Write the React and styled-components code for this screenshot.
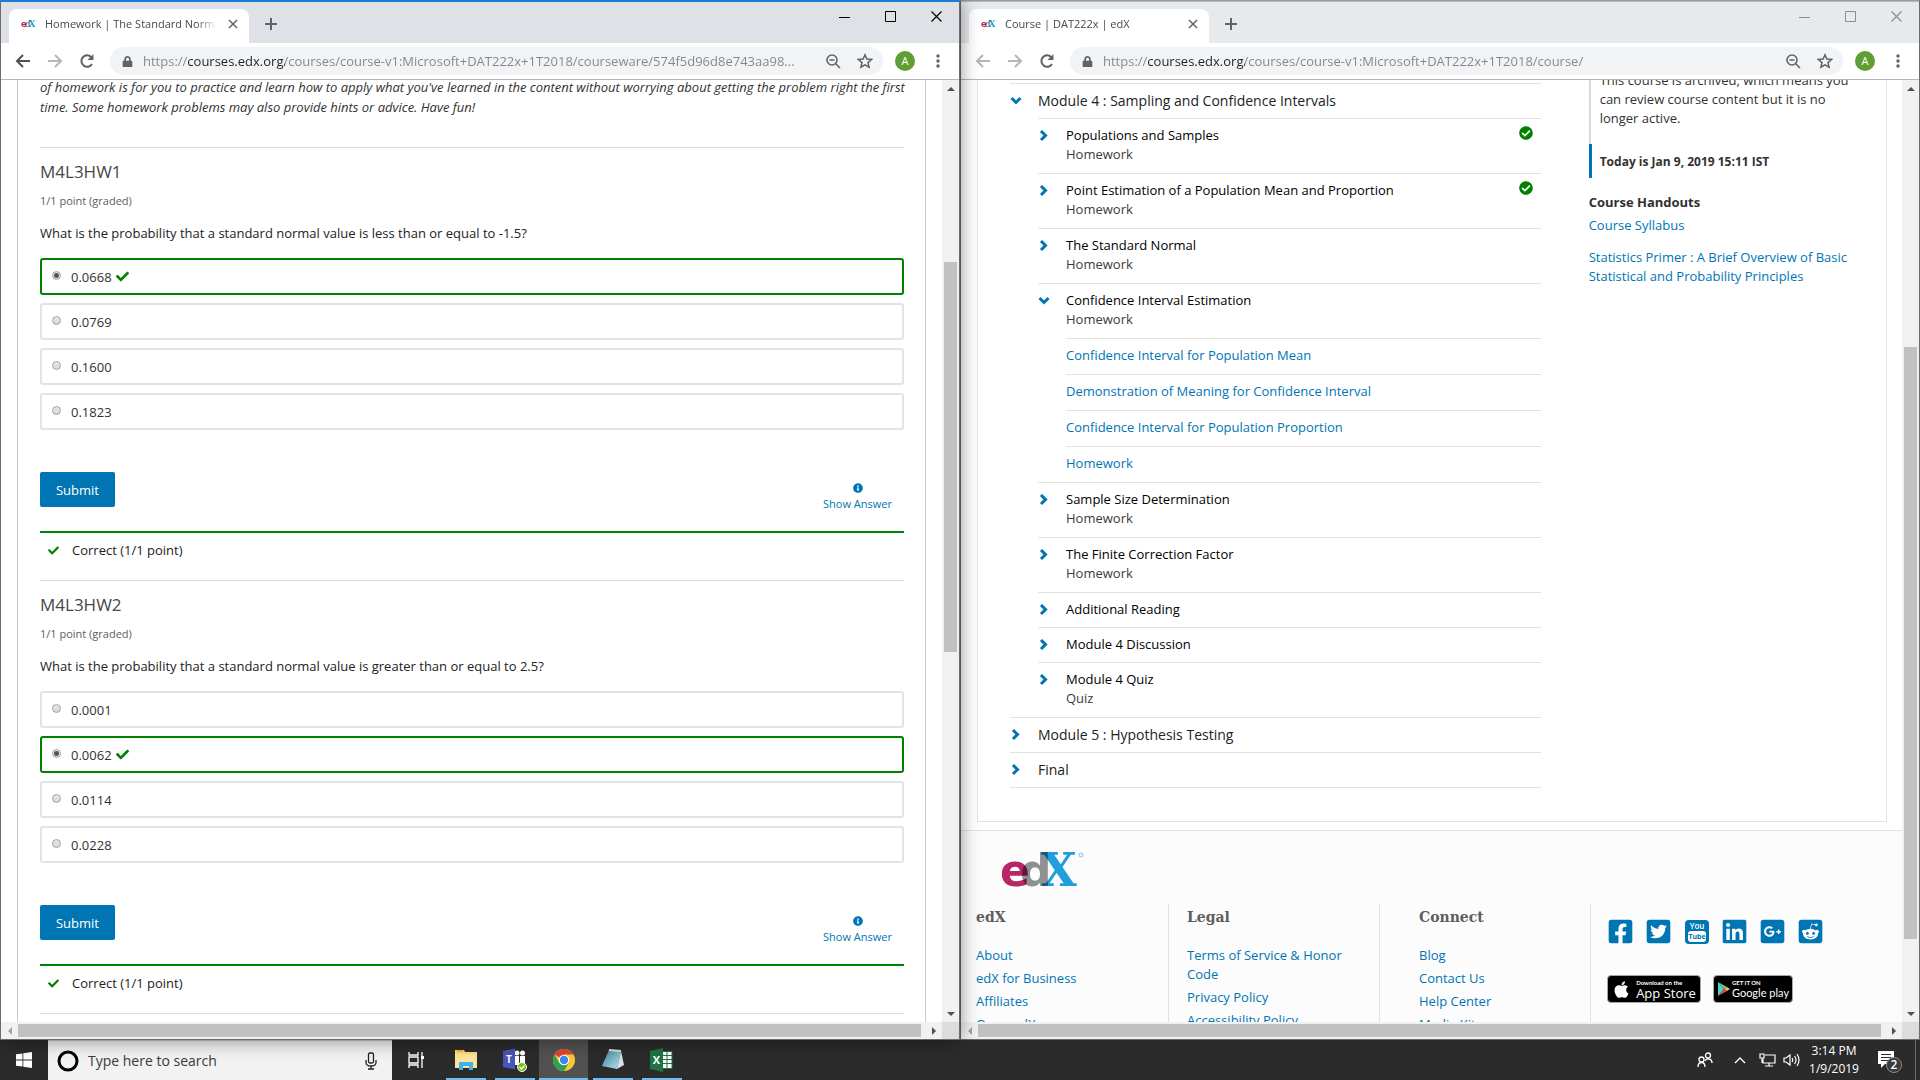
import React from 'react';
import styled, { createGlobalStyle, css } from 'styled-components';
import { FaCheck, FaCheckCircle, FaInfoCircle, FaApple, FaFacebookSquare, FaTwitterSquare, FaLinkedin, FaGooglePlusSquare, FaRedditSquare, FaLock } from 'react-icons/fa';

const blue = '#0075b4';
const green = '#008100';
const line = '#e2e2e2';

const GlobalStyle = createGlobalStyle`
  * { box-sizing: border-box; }
  body { margin: 0; background: #2b2b2b; font-family: "Open Sans", "Noto Sans", sans-serif; font-size: 13px; color: #313131; }
  button, input { font: inherit; }
  h2, h3, p, ul { margin: 0; padding: 0; font-weight: 400; }
  ul { list-style: none; }
  a { color: ${blue}; text-decoration: none; }
  svg { display: block; flex: none; }
`;

const Desktop = styled.div`
  display: grid;
  grid-template-rows: minmax(0, 1fr) 40px;
  height: 100vh;
  overflow: hidden;
`;
const Windows = styled.main`
  display: grid;
  grid-template-columns: 1fr 1fr;
  min-height: 0;
`;
const Frame = styled.section`
  display: grid;
  grid-template-rows: 42px 37px minmax(0, 1fr);
  min-width: 0;
  min-height: 0;
  background: #fff;
  border: 1px solid #6b6b6b;
  border-top-color: ${p => (p.$active ? '#1a7fd4' : '#9b9b9b')};
  z-index: ${p => (p.$active ? 1 : 0)};
  box-shadow: ${p => (p.$active ? '0 0 18px rgba(0,0,0,.45)' : 'none')};
`;

/* ---- browser chrome ---- */
const TabStrip = styled.header`
  display: flex;
  align-items: flex-end;
  padding-left: 8px;
  border-top: 1px solid ${p => (p.$active ? '#1a7fd4' : '#b5b7b9')};
  background: ${p => (p.$active ? '#dee1e6' : '#e7eaed')};
`;
const Tab = styled.div`
  display: flex;
  align-items: center;
  gap: 8px;
  width: 240px;
  height: 34px;
  padding: 0 8px 4px 12px;
  border-radius: 8px 8px 0 0;
  background: #fff;
`;
const TabTitle = styled.span`
  flex: 1;
  min-width: 0;
  overflow: hidden;
  white-space: nowrap;
  font-size: 11px;
  line-height: 18px;
  color: #45494d;
  mask-image: linear-gradient(to right, #000 88%, transparent);
`;
const IconButton = styled.button`
  display: flex;
  align-items: center;
  justify-content: center;
  flex: none;
  width: ${p => p.$w || 32}px;
  height: ${p => p.$h || 28}px;
  padding: 0;
  border: 0;
  background: none;
  color: ${p => p.$color || '#5f6368'};
`;
const Controls = styled.div`
  display: flex;
  align-self: flex-start;
  margin-left: auto;
`;
const Toolbar = styled.div`
  display: flex;
  align-items: center;
  padding: 0 5px 0 6px;
  border-bottom: 1px solid #b6b6b8;
`;
const AddressBar = styled.label`
  display: flex;
  align-items: center;
  flex: 1;
  min-width: 0;
  height: 28px;
  margin: 0 12px 0 7px;
  padding: 0 2px 0 12px;
  border-radius: 14px;
  background: #f1f3f4;
  color: #5f6368;
`;
const Address = styled.input`
  flex: 1;
  min-width: 0;
  margin-left: 10px;
  padding: 0;
  border: 0;
  outline: 0;
  font-size: 13px;
  line-height: 20px;
  color: #80868b;
  background: linear-gradient(to right, #80868b 45px, #202124 45px, #202124 142px, #80868b 142px);
  background-clip: text;
  -webkit-text-fill-color: transparent;
`;
const Avatar = styled.button`
  width: 20px;
  height: 20px;
  margin-right: 7px;
  padding: 0;
  border: 0;
  border-radius: 50%;
  background: #5f9e34;
  color: #fff;
  font-size: 11px;
  line-height: 20px;
`;

/* ---- page viewport and scrollbars ---- */
const Viewport = styled.div`
  display: grid;
  grid-template: minmax(0, 1fr) 17px / minmax(0, 1fr) 17px;
  min-height: 0;
`;
const Page = styled.div`
  overflow: hidden;
  min-height: 0;
  display: flex;
  flex-direction: column;
`;
const Track = styled.div`
  display: grid;
  grid-template: ${p => (p.$vertical ? '17px minmax(0, 1fr) 17px / 1fr' : '1fr / 17px minmax(0, 1fr) 17px')};
  background: #f1f1f1;
  svg { place-self: center; fill: #505050; }
  svg:first-child { fill: ${p => (p.$atStart ? '#a3a3a3' : '#505050')}; }
`;
const Groove = styled.div`
  display: flex;
  flex-direction: ${p => (p.$vertical ? 'column' : 'row')};
  padding: ${p => (p.$vertical ? '0 2px' : '2px 0')};
`;
const Thumb = styled.div`
  background: #c1c1c1;
`;
const Corner = styled.div`
  background: #dcdcdc;
`;

/* ---- homework page ---- */
const HomeworkCard = styled.div`
  flex: 1;
  margin: 0 16px;
  padding: 0 21px 0 22px;
  border: 1px solid #c8c8c8;
  border-width: 0 1px;
`;
const Intro = styled.p`
  height: 70px;
  margin-top: -3px;
  font-style: italic;
  line-height: 20px;
  white-space: pre;
`;
const Problem = styled.section`
  height: 433px;
  padding-top: 12px;
  border-top: 1px solid #dcdcdc;
`;
const ProblemTitle = styled.h3`
  font-size: 17px;
  line-height: 24px;
  color: #474747;
`;
const Points = styled.p`
  margin-top: 9px;
  font-size: 11px;
  line-height: 16px;
  color: #5e5e5e;
`;
const Question = styled.p`
  margin: 14px 0 15px;
  line-height: 20px;
  color: #222;
`;
const Choices = styled.div`
  display: grid;
  gap: 8px;
`;
const Choice = styled.label`
  display: flex;
  align-items: center;
  height: 37px;
  padding-left: 10px;
  border: 2px solid ${p => (p.$correct ? green : '#e3e3e3')};
  border-radius: 3px;
  svg { margin-left: 4px; color: ${green}; }
`;
const Radio = styled.input`
  appearance: none;
  width: 9px;
  height: 9px;
  margin: 0 10px 2px 0;
  border: 1px solid #a2a2a2;
  border-radius: 50%;
  background: ${p => (p.defaultChecked ? 'radial-gradient(circle, #555 2px, #e4e4e4 3px)' : 'linear-gradient(#e8e8e8, #d8d8d8)')};
`;
const Actions = styled.div`
  display: flex;
  align-items: flex-start;
  justify-content: space-between;
  height: 101px;
  padding: 42px 12px 0 0;
`;
const Submit = styled.button`
  width: 75px;
  height: 35px;
  border: 0;
  border-radius: 2px;
  background: ${blue};
  color: #fff;
`;
const ShowAnswer = styled.button`
  display: flex;
  flex-direction: column;
  align-items: center;
  margin-top: 11px;
  padding: 0;
  border: 0;
  background: none;
  color: ${blue};
  font-size: 11px;
  line-height: 16px;
  gap: 3px;
`;
const Status = styled.p`
  display: flex;
  align-items: center;
  gap: 13px;
  padding: 6px 8px 0;
  border-top: 2px solid ${green};
  color: #222;
  line-height: 22px;
  svg { color: ${green}; }
`;

/* ---- course page ---- */
const CourseCard = styled.div`
  display: grid;
  grid-template-columns: 2fr 1fr;
  gap: 48px;
  height: 742px;
  margin: 0 15px 8px 16px;
  padding: 3px 32px 0;
  border: 1px solid ${line};
  border-top: 0;
`;
const Outline = styled.ul`
  > li { border-top: 1px solid ${line}; }
  > li:last-child { border-bottom: 1px solid ${line}; }
`;
const Lessons = styled.ul`
  padding-left: 28px;
`;
const Row = styled.div`
  display: flex;
  align-items: flex-start;
  min-height: ${p => (p.$double ? 54 : 34)}px;
  padding: ${p => (p.$module ? '7px 0 0' : '7px 8px 0 0')};
  color: ${p => (p.$module ? '#222' : '#000')};
  line-height: 19px;
  font-size: ${p => (p.$module ? 14 : 13)}px;
  > svg:first-child { margin: 4px 16px 0 0; }
`;
const RowText = styled.div`
  flex: 1;
`;
const Kind = styled.div`
  color: #3b3b3b;
`;
const Lesson = styled.li`
  border-top: 1px solid ${line};
`;
const Units = styled.ul`
  padding-left: 28px;
`;
const Unit = styled.li`
  height: 36px;
  padding-top: 7px;
  border-top: 1px solid ${line};
  line-height: 19px;
`;
const Sidebar = styled.aside`
  line-height: 19px;
`;
const NoticeWrap = styled.div`
  height: 61px;
  display: flex;
  align-items: flex-end;
`;
const Notice = styled.p`
  height: 73px;
  padding: 0 0 0 9px;
  border-left: 2px solid #d9d9d9;
`;
const Today = styled.p`
  height: 34px;
  padding: 8px 0 0 8px;
  border-left: 3px solid ${blue};
  font-size: 12px;
  font-weight: 700;
`;
const Handouts = styled.h3`
  margin: 15px 0 4px;
  font-size: 13px;
  font-weight: 700;
`;
const Handout = styled.p`
  margin-bottom: 13px;
  white-space: pre-line;
`;

const Footer = styled.footer`
  flex: 1;
  min-height: 0;
  padding: 20px 15px 0;
  border-top: 1px solid ${line};
  background: #fcfcfc;
`;
const LogoLink = styled.a`
  display: block;
  height: 53px;
  padding-left: 24px;
`;
const FooterGrid = styled.div`
  display: grid;
  grid-template-columns: 192fr 211fr 211fr 297fr;
  height: 300px;
`;
const FooterColumn = styled.div`
  padding: 0 16px 0 ${p => p.$indent || 0}px;
  border-left: ${p => (p.$indent ? `1px solid ${line}` : '0')};
  line-height: 19px;
  li { margin-bottom: 4px; }
`;
const FooterTitle = styled.h2`
  margin-bottom: 19px;
  padding-top: 3px;
  font: 700 14px/20px "DejaVu Serif", "Liberation Serif", serif;
  color: #5e5e5e;
`;
const Socials = styled.div`
  display: flex;
  gap: 11px;
  padding: 14px 0 30px;
  a {
    display: flex;
    align-items: center;
    justify-content: center;
    width: 27px;
    height: 27px;
  }
`;
const Badges = styled.div`
  display: flex;
  gap: 12px;
`;
const Badge = styled.a`
  display: flex;
  align-items: center;
  justify-content: center;
  gap: ${p => p.$gap}px;
  width: ${p => p.$w}px;
  height: 28px;
  border: 1px solid #a6a6a6;
  border-radius: 4px;
  background: #000;
  color: #fff;
`;
const BadgeText = styled.span`
  display: grid;
  font: ${p => (p.$light ? '400 11px/12px Lato' : '500 13px/13px "Open Sans"')}, sans-serif;
  white-space: nowrap;
  small { font: 700 6px/8px Lato, sans-serif; }
`;

/* ---- taskbar ---- */
const Taskbar = styled.nav`
  display: flex;
  background: #2b2b2b;
  color: #fff;
`;
const TaskButton = styled.button`
  display: flex;
  align-items: center;
  justify-content: center;
  width: ${p => p.$w || 49}px;
  height: 40px;
  padding: 0;
  border: 0;
  background: ${p => (p.$active ? '#515151' : 'none')};
  ${p => p.$open && css`
    background-image: linear-gradient(#76b9ed, #76b9ed);
    background-size: ${p.$active ? '100%' : '40px'} 2px;
    background-position: center bottom;
    background-repeat: no-repeat;
  `}
`;
const Search = styled.label`
  display: flex;
  align-items: center;
  width: 344px;
  padding: 0 15px 0 9px;
  background: #f2f2f2;
  border-top: 1px solid #c9c9c9;
`;
const SearchInput = styled.input`
  flex: 1;
  min-width: 0;
  padding: 0 0 0 9px;
  border: 0;
  outline: 0;
  background: none;
  font-size: 14px;
  &::placeholder { color: #3a3a3a; opacity: 1; }
`;
const Tray = styled.div`
  display: flex;
  align-items: center;
  margin-left: auto;
`;
const Clock = styled.time`
  width: 62px;
  text-align: center;
  font-size: 12px;
  line-height: 18px;
`;
const DesktopEdge = styled.button`
  width: 5px;
  height: 40px;
  padding: 0;
  border: 0;
  border-left: 1px solid #6a6a6a;
  background: none;
`;

const Chevron = ({ down }) => down ? (
  <svg width="12" height="12" viewBox="0 0 12 12"><path d="M1.500 3l4.500 4.500L10.500 3" fill="none" stroke={blue} strokeWidth="3" /></svg>
) : (
  <svg width="12" height="12" viewBox="0 0 12 12"><path d="M3 1l4.500 4.500L3 10" fill="none" stroke={blue} strokeWidth="3" /></svg>
);

const Logo = ({ width, height }) => (
  <svg width={width} height={height} viewBox="0 0 84 37" overflow="visible" role="img" aria-label="edX">
    <g style={{ isolation: 'isolate' }} fontWeight="700">
      <text x="0" y="35" fontFamily="DejaVu Sans" fontSize="44" fill="#b72667">e</text>
      <text x="20" y="35" fontFamily="DejaVu Sans" fontSize="44" fill="#8e9092" style={{ mixBlendMode: 'multiply' }}>d</text>
      <text x="41" y="35" fontFamily="DejaVu Serif" fontSize="46" fill="#1f9fdc" style={{ mixBlendMode: 'multiply' }}>X</text>
    </g>
    <circle cx="81" cy="4" r="2" fill="none" stroke="#7cc6ea" />
  </svg>
);

const Stroke = ({ d, size = 16, w = 2, vb = 16 }) => (
  <svg width={size} height={size} viewBox={`0 0 ${vb} ${vb}`} fill="none" stroke="currentColor" strokeWidth={w}><path d={d} /></svg>
);

function Scrollbar({ vertical, before, size, after }) {
  const arrows = vertical ? ['M0 5L4 1L8 5Z', 'M0 1L4 5L8 1Z'] : ['M5 0L1 4L5 8Z', 'M1 0L5 4L1 8Z'];
  const box = vertical ? [8, 6] : [6, 8];
  const Arrow = ({ d }) => <svg width={box[0]} height={box[1]}><path d={d} /></svg>;
  return (
    <Track $vertical={vertical} $atStart={before === 0}>
      <Arrow d={arrows[0]} />
      <Groove $vertical={vertical}>
        <div style={{ flex: before }} />
        <Thumb style={{ flex: size }} />
        <div style={{ flex: after }} />
      </Groove>
      <Arrow d={arrows[1]} />
    </Track>
  );
}

function BrowserWindow({ active, title, url, scroll, children }) {
  const ink = active ? '#000' : '#8b8d8f';
  return (
    <Frame $active={active}>
      <TabStrip $active={active}>
        <Tab>
          <Logo width={16} height={8} />
          <TabTitle>{title}</TabTitle>
          <IconButton $w={16} $h={16} aria-label="Close tab"><Stroke size={10} vb={10} w={1.500} d="M1 1l8 8M9 1l-8 8" /></IconButton>
        </Tab>
        <IconButton $w={44} $h={38} aria-label="New tab"><Stroke size={12} vb={12} d="M6 0v12M0 6h12" /></IconButton>
        <Controls>
          <IconButton $w={46} $color={ink} aria-label="Minimize"><Stroke size={11} vb={11} w={1} d="M0 6.500h11" /></IconButton>
          <IconButton $w={46} $color={ink} aria-label="Maximize"><Stroke size={11} vb={11} w={1} d="M.5.5h10v10H.5z" /></IconButton>
          <IconButton $w={46} $color={ink} aria-label="Close window"><Stroke size={11} vb={11} w={1.200} d="M.5.5l10 10M10.500.5l-10 10" /></IconButton>
        </Controls>
      </TabStrip>
      <Toolbar>
        <IconButton $color={active ? '#4f5357' : '#b4b6b8'} aria-label="Back"><Stroke d="M15 8H2M8 2L2 8l6 6" /></IconButton>
        <IconButton $color="#b4b6b8" aria-label="Forward"><Stroke d="M1 8h13M8 2l6 6-6 6" /></IconButton>
        <IconButton aria-label="Reload">
          <svg width="16" height="16" viewBox="0 0 16 16"><path d="M13 11A5.700 5.700 0 1 1 12.300 4.200" fill="none" stroke="currentColor" strokeWidth="2" /><path d="M14.500 1v6h-6z" fill="currentColor" /></svg>
        </IconButton>
        <AddressBar>
          <FaLock size={11} />
          <Address aria-label="Address" defaultValue={url} spellCheck={false} />
          <IconButton aria-label="Zoom"><Stroke size={15} vb={15} w={1.600} d="M9.500 9.500l4.500 4.500M3.500 6h5M6 1a5 5 0 1 0 0 10A5 5 0 1 0 6 1z" /></IconButton>
          <IconButton aria-label="Bookmark"><Stroke size={16} w={1.500} d="M8 1.800l1.900 4.300 4.700.4-3.600 3.100 1.100 4.600L8 11.800l-4.100 2.400L5 9.600 1.400 6.500l4.700-.4z" /></IconButton>
        </AddressBar>
        <Avatar aria-label="Profile">A</Avatar>
        <IconButton aria-label="Menu"><svg width="4" height="16" fill="currentColor"><circle cx="2" cy="3" r="1.700" /><circle cx="2" cy="8" r="1.700" /><circle cx="2" cy="13" r="1.700" /></svg></IconButton>
      </Toolbar>
      <Viewport>
        <Page>{children}</Page>
        <Scrollbar vertical {...scroll} />
        <Scrollbar before={0} size={904} after={4} />
        <Corner />
      </Viewport>
    </Frame>
  );
}

const problems = [
  { id: 'M4L3HW1', text: 'What is the probability that a standard normal value is less than or equal to -1.5?', options: ['0.0668', '0.0769', '0.1600', '0.1823'], answer: 0 },
  { id: 'M4L3HW2', text: 'What is the probability that a standard normal value is greater than or equal to 2.5?', options: ['0.0001', '0.0062', '0.0114', '0.0228'], answer: 1 },
];

function HomeworkPage() {
  return (
    <HomeworkCard>
      <Intro>{"of homework is for you to practice and learn how to apply what you've learned in the content without worrying about getting the problem right the first\ntime. Some homework problems may also provide hints or advice. Have fun!"}</Intro>
      {problems.map(p => (
        <Problem key={p.id}>
          <ProblemTitle>{p.id}</ProblemTitle>
          <Points>1/1 point (graded)</Points>
          <Question>{p.text}</Question>
          <Choices>
            {p.options.map((o, i) => (
              <Choice key={o} $correct={i === p.answer}>
                <Radio type="radio" name={p.id} defaultChecked={i === p.answer} />
                {o}
                {i === p.answer && <FaCheck size={13} />}
              </Choice>
            ))}
          </Choices>
          <Actions>
            <Submit>Submit</Submit>
            <ShowAnswer><FaInfoCircle size={10} />Show Answer</ShowAnswer>
          </Actions>
          <Status><FaCheck size={11} />Correct (1/1 point)</Status>
        </Problem>
      ))}
      <Problem />
    </HomeworkCard>
  );
}

const lessons = [
  { name: 'Populations and Samples', kind: 'Homework', done: true },
  { name: 'Point Estimation of a Population Mean and Proportion', kind: 'Homework', done: true },
  { name: 'The Standard Normal', kind: 'Homework' },
  { name: 'Confidence Interval Estimation', kind: 'Homework', units: ['Confidence Interval for Population Mean', 'Demonstration of Meaning for Confidence Interval', 'Confidence Interval for Population Proportion', 'Homework'] },
  { name: 'Sample Size Determination', kind: 'Homework' },
  { name: 'The Finite Correction Factor', kind: 'Homework' },
  { name: 'Additional Reading' },
  { name: 'Module 4 Discussion' },
  { name: 'Module 4 Quiz', kind: 'Quiz' },
];

const YouTube = () => (
  <svg width="24" height="24" viewBox="0 0 24 24">
    <rect width="24" height="24" rx="4" fill={blue} />
    <text x="12" y="9" textAnchor="middle" fontFamily="Open Sans" fontWeight="600" fontSize="8" fill="#fff">You</text>
    <rect x="3" y="11" width="18" height="11" rx="3" fill="#fff" />
    <text x="12" y="19" textAnchor="middle" fontFamily="Open Sans" fontWeight="700" fontSize="7" fill={blue}>Tube</text>
  </svg>
);

const socials = [['Facebook', FaFacebookSquare], ['Twitter', FaTwitterSquare], ['YouTube', YouTube], ['LinkedIn', FaLinkedin], ['Google+', FaGooglePlusSquare], ['Reddit', FaRedditSquare]];

function CoursePage() {
  return (
    <>
      <CourseCard>
        <Outline>
          <li>
            <Row $module><Chevron down /><RowText>Module 4 : Sampling and Confidence Intervals</RowText></Row>
            <Lessons>
              {lessons.map(l => (
                <Lesson key={l.name}>
                  <Row $double={!!l.kind}>
                    <Chevron down={!!l.units} />
                    <RowText>{l.name}{l.kind && <Kind>{l.kind}</Kind>}</RowText>
                    {l.done && <FaCheckCircle size={14} color={green} />}
                  </Row>
                  {l.units && <Units>{l.units.map(u => <Unit key={u}><a href="#unit">{u}</a></Unit>)}</Units>}
                </Lesson>
              ))}
            </Lessons>
          </li>
          <li><Row $module><Chevron /><RowText>Module 5 : Hypothesis Testing</RowText></Row></li>
          <li><Row $module><Chevron /><RowText>Final</RowText></Row></li>
        </Outline>
        <Sidebar>
          <NoticeWrap><Notice>This course is archived, which means you can review course content but it is no longer active.</Notice></NoticeWrap>
          <Today>Today is Jan 9, 2019 15:11 IST</Today>
          <Handouts>Course Handouts</Handouts>
          <Handout><a href="#syllabus">Course Syllabus</a></Handout>
          <Handout><a href="#primer">{'Statistics Primer : A Brief Overview of Basic\nStatistical and Probability Principles'}</a></Handout>
        </Sidebar>
      </CourseCard>
      <Footer>
        <LogoLink href="#home" aria-label="edX home"><Logo width={84} height={37} /></LogoLink>
        <FooterGrid>
          <FooterColumn>
            <FooterTitle>edX</FooterTitle>
            <ul>{['About', 'edX for Business', 'Affiliates', 'Open edX'].map(t => <li key={t}><a href="#link">{t}</a></li>)}</ul>
          </FooterColumn>
          <FooterColumn $indent={18}>
            <FooterTitle>Legal</FooterTitle>
            <ul>{['Terms of Service & Honor Code', 'Privacy Policy', 'Accessibility Policy'].map(t => <li key={t}><a href="#link">{t}</a></li>)}</ul>
          </FooterColumn>
          <FooterColumn $indent={39}>
            <FooterTitle>Connect</FooterTitle>
            <ul>{['Blog', 'Contact Us', 'Help Center', 'Media Kit'].map(t => <li key={t}><a href="#link">{t}</a></li>)}</ul>
          </FooterColumn>
          <FooterColumn $indent={16}>
            <Socials>
              {socials.map(([n, Icon]) => <a key={n} href="#social" aria-label={n}><Icon size={27} /></a>)}
            </Socials>
            <Badges>
              <Badge href="#ios" $w={94} $gap={5}><FaApple size={19} /><BadgeText><small>Download on the</small>App Store</BadgeText></Badge>
              <Badge href="#android" $w={80} $gap={2}>
                <svg width="13" height="14" viewBox="0 0 13 14"><path d="M1 0v14l6-7z" fill="#4fd0d6" /><path d="M1 0l9 5-3 2z" fill="#72c66e" /><path d="M10 5l3 2-3 2-3-2z" fill="#f6c244" /><path d="M1 14l9-5-3-2z" fill="#e5486b" /></svg>
                <BadgeText $light><small>GET IT ON</small>Google play</BadgeText>
              </Badge>
            </Badges>
          </FooterColumn>
        </FooterGrid>
      </Footer>
    </>
  );
}

const Tasks = () => (
  <Taskbar aria-label="Taskbar">
    <TaskButton $w={48} aria-label="Start"><svg width="16" height="16" fill="#fff"><path d="M0 2.300l6.500-.9v6.200H0zM7.300 1.300L16 0v7.600H7.300zM0 8.400h6.500v6.200L0 13.700zM7.300 8.400H16V16l-8.700-1.300z" /></svg></TaskButton>
    <Search>
      <svg width="22" height="22"><circle cx="11" cy="11" r="9" fill="none" stroke="#000" strokeWidth="3" /></svg>
      <SearchInput type="search" aria-label="Search" placeholder="Type here to search" />
      <svg width="12" height="18" fill="none" stroke="#222" strokeWidth="1.300"><rect x="3.500" y="1" width="5" height="10" rx="1.500" /><path d="M1 8v2.500C1 12.500 3 14 6 14s5-1.500 5-3.500V8M6 14v3M3 17h6" /></svg>
    </Search>
    <TaskButton aria-label="Task view"><svg width="17" height="16" fill="none" stroke="#fff" strokeWidth="1.300"><path d="M1 0v3h9V0M1 16v-3h9v3M1 5h9v6H1zM14 0v16" /><rect x="13" y="4" width="3" height="3" fill="#fff" stroke="none" /></svg></TaskButton>
    <TaskButton $open aria-label="File Explorer"><svg width="22" height="20"><path d="M0 0h9l1 2h12v16H0z" fill="#f9d978" /><path d="M2 0h6v2H2z" fill="#f0b93a" /><path d="M0 4h22v14H0z" fill="#fde49b" /><path d="M4 20v-8h14v8h-4v-4H8v4z" fill="#3db3ea" /></svg></TaskButton>
    <TaskButton $open aria-label="Teams">
      <svg width="26" height="24"><circle cx="15" cy="5" r="2.500" fill="#fff" /><circle cx="20.500" cy="5" r="2.500" fill="#fff" /><path d="M12 8h5v9h-5zM18 8h5v8h-5z" fill="#fff" /><path d="M1 3l12-2.500v21L1 19z" fill="#4b53bc" /><text x="7" y="15" textAnchor="middle" fontFamily="Open Sans" fontWeight="700" fontSize="10" fill="#fff">T</text><circle cx="20" cy="19" r="4.500" fill="#7cbb15" stroke="#fff" /><path d="M17.500 19l2 2 3-3.500" fill="none" stroke="#fff" strokeWidth="1.300" /></svg>
    </TaskButton>
    <TaskButton $open $active aria-label="Chrome">
      <svg width="22" height="22" viewBox="0 0 22 22"><circle cx="11" cy="11" r="11" fill="#fbc831" /><path d="M11 11L1.500 5.500A11 11 0 0 1 20.500 5.500H11z" fill="#e04335" /><path d="M1.500 5.500A11 11 0 0 0 11 22l4.800-8.300L6.200 13.700z" fill="#2ba24c" /><circle cx="11" cy="11" r="5.300" fill="#fff" /><circle cx="11" cy="11" r="4.200" fill="#4286f4" /></svg>
    </TaskButton>
    <TaskButton $open aria-label="Notepad"><svg width="24" height="22"><defs><linearGradient id="pad" x1="0" y1="0" x2="1" y2="1"><stop offset="0" stopColor="#3d7f94" /><stop offset="1" stopColor="#b5e6f1" /></linearGradient></defs><path d="M8 1l12 1-4 18-15-3z" fill="url(#pad)" /><path d="M20 2l3 14-7 4z" fill="#d6e4e8" /><path d="M8 1l12 1" stroke="#ddd" strokeWidth="2" /></svg></TaskButton>
    <TaskButton $open aria-label="Excel"><svg width="23" height="24"><path d="M12 3.500h10v17H12z" fill="#fff" stroke="#1f7244" /><path d="M13 7.500h9M13 11.500h9M13 15.500h9M17 4v16" stroke="#1f7244" /><path d="M0 3L13 0v24L0 21z" fill="#1f7244" /><text x="6.500" y="16" textAnchor="middle" fontFamily="Open Sans" fontWeight="700" fontSize="11" fill="#fff">X</text></svg></TaskButton>
    <Tray>
      <TaskButton $w={40} aria-label="People"><svg width="16" height="16" fill="none" stroke="#fff" strokeWidth="1.300"><circle cx="11" cy="3.500" r="2.500" /><circle cx="4.500" cy="7.500" r="2.500" /><path d="M1 15c0-6 7-6 7 0M8 9c1-3 7-3 7 2" /></svg></TaskButton>
      <TaskButton $w={30} aria-label="Hidden icons"><svg width="12" height="7" fill="none" stroke="#fff" strokeWidth="1.300"><path d="M1 6l5-5 5 5" /></svg></TaskButton>
      <TaskButton $w={24} aria-label="Network"><svg width="17" height="14" fill="none" stroke="#fff" strokeWidth="1.200"><path d="M6 2h10v8H4V6M10 10v3M6 13h8M1 1h4v4H1zM3 5v5" /></svg></TaskButton>
      <TaskButton $w={24} aria-label="Volume"><svg width="17" height="14" fill="none" stroke="#fff" strokeWidth="1.200"><path d="M1 5h2l4-3v10L3 9H1zM9 5q1.500 2 0 4M11.500 3q3 4 0 8M14 1q4 6 0 12" /></svg></TaskButton>
      <Clock>3:14 PM<br />1/9/2019</Clock>
      <TaskButton $w={50} aria-label="Notifications, 2 new">
        <svg width="26" height="26"><path d="M1 4h16v13H8l-4 4v-4H1z" fill="#fff" /><path d="M4 7.500h10M4 10.500h10M4 13.500h7" stroke="#2b2b2b" /><circle cx="17" cy="18" r="7.500" fill="#3a3a3a" stroke="#8a8a8a" /><text x="17" y="22" textAnchor="middle" fontFamily="Open Sans" fontWeight="600" fontSize="12" fill="#fff">2</text></svg>
      </TaskButton>
      <DesktopEdge aria-label="Show desktop" />
    </Tray>
  </Taskbar>
);

export default function App() {
  return (
    <Desktop>
      <GlobalStyle />
      <Windows>
        <BrowserWindow active title="Homework | The Standard Normal" url="https://courses.edx.org/courses/course-v1:Microsoft+DAT222x+1T2018/courseware/574f5d96d8e743aa98..." scroll={{ before: 165, size: 390, after: 353 }}>
          <HomeworkPage />
        </BrowserWindow>
        <BrowserWindow title="Course | DAT222x | edX" url="https://courses.edx.org/courses/course-v1:Microsoft+DAT222x+1T2018/course/" scroll={{ before: 250, size: 592, after: 66 }}>
          <CoursePage />
        </BrowserWindow>
      </Windows>
      <Tasks />
    </Desktop>
  );
}
